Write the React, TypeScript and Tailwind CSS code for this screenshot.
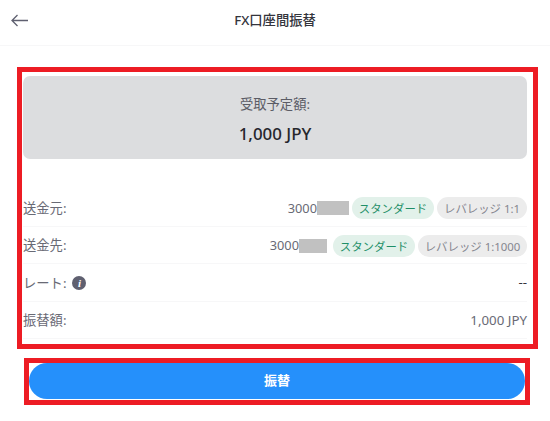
const font = { fontFamily: '"Noto Sans", "Noto Sans CJK JP", sans-serif' };

function Row({ label, children, icon }: { label: string; children: React.ReactNode; icon?: boolean }) {
  return (
    <div className="flex h-[37.5px] items-center justify-between border-b border-[#f7f7f8] pt-[2px]">
      <div className="flex items-center gap-[6px] text-[13.3px] text-[#696a75]">
        <span className="pt-px">{label}</span>
        {icon && (
          <span className="flex h-[14px] w-[14px] items-center justify-center rounded-full bg-[#5f6070] text-[11px] leading-none font-bold italic text-white [font-family:'Liberation_Serif',serif]">
            i
          </span>
        )}
      </div>
      <div className="flex items-center text-[13.3px] text-[#696a75]">{children}</div>
    </div>
  );
}

function Account({ mask, lev, levWidth }: { mask: string; lev: string; levWidth: string }) {
  return (
    <>
      <span className="text-[12.8px]">3000</span>
      <span className={`h-[14px] bg-[#c1c1c1] ${mask}`} />
      <span className="ml-[3px] flex h-[22px] w-[82px] items-center justify-center rounded-full bg-[#e2f1ea] pt-px text-[11.4px] text-[#1f8f68]">スタンダード</span>
      <span className={`ml-[3px] flex h-[22px] items-center justify-center rounded-full bg-[#ececec] pt-px text-[11.4px] text-[#85868f] ${levWidth}`}>{lev}</span>
    </>
  );
}

export default function App() {
  return (
    <div className="h-[421px] w-[550px] overflow-hidden bg-white" style={font}>
      <header className="relative flex h-[46px] items-center justify-center border-b border-[#f7f7f8] pb-[3px]">
        <svg className="absolute left-[11px] top-[14px]" width="17" height="13" viewBox="0 0 17 13" fill="none" stroke="#5f6070" strokeWidth="1.3">
          <path d="M1 6.5H17M6.5 1L1 6.5L6.5 12" />
        </svg>
        <h1 className="text-[13.3px] font-medium text-[#33343c]">FX口座間振替</h1>
      </header>

      <section className="mx-[17px] mt-[21px] h-[282px] w-[521px] border-[5px] border-[#ed1c24] pl-px pr-[6px] pt-[4px]">
        <div className="flex h-[83px] flex-col items-center rounded-[7px] bg-[#dcdddf]">
          <div className="mt-[19px] text-[13.3px] leading-[18px] text-[#5b5c66]">受取予定額:</div>
          <div className="mt-[9px] text-[16.9px] leading-[24px] font-medium text-[#26272d]">1,000 JPY</div>
        </div>
        <div className="mt-[30px]">
          <Row label="送金元:">
            <Account mask="w-[32px]" lev="レバレッジ 1:1" levWidth="w-[90px]" />
          </Row>
          <Row label="送金先:">
            <Account mask="w-[28px] mr-[3px]" lev="レバレッジ 1:1000" levWidth="w-[109px]" />
          </Row>
          <Row label="レート:" icon>
            <span className="text-[#33343c]">--</span>
          </Row>
          <Row label="振替額:">
            <span className="pt-px">1,000 JPY</span>
          </Row>
        </div>
      </section>

      <div className="ml-[24px] mt-[9px] h-[47px] w-[506px] border-[5px] border-[#ed1c24]">
        <button className="h-[36px] w-full rounded-[18px] bg-[#2590fb] text-[13px] font-bold text-white">振替</button>
      </div>
    </div>
  );
}
